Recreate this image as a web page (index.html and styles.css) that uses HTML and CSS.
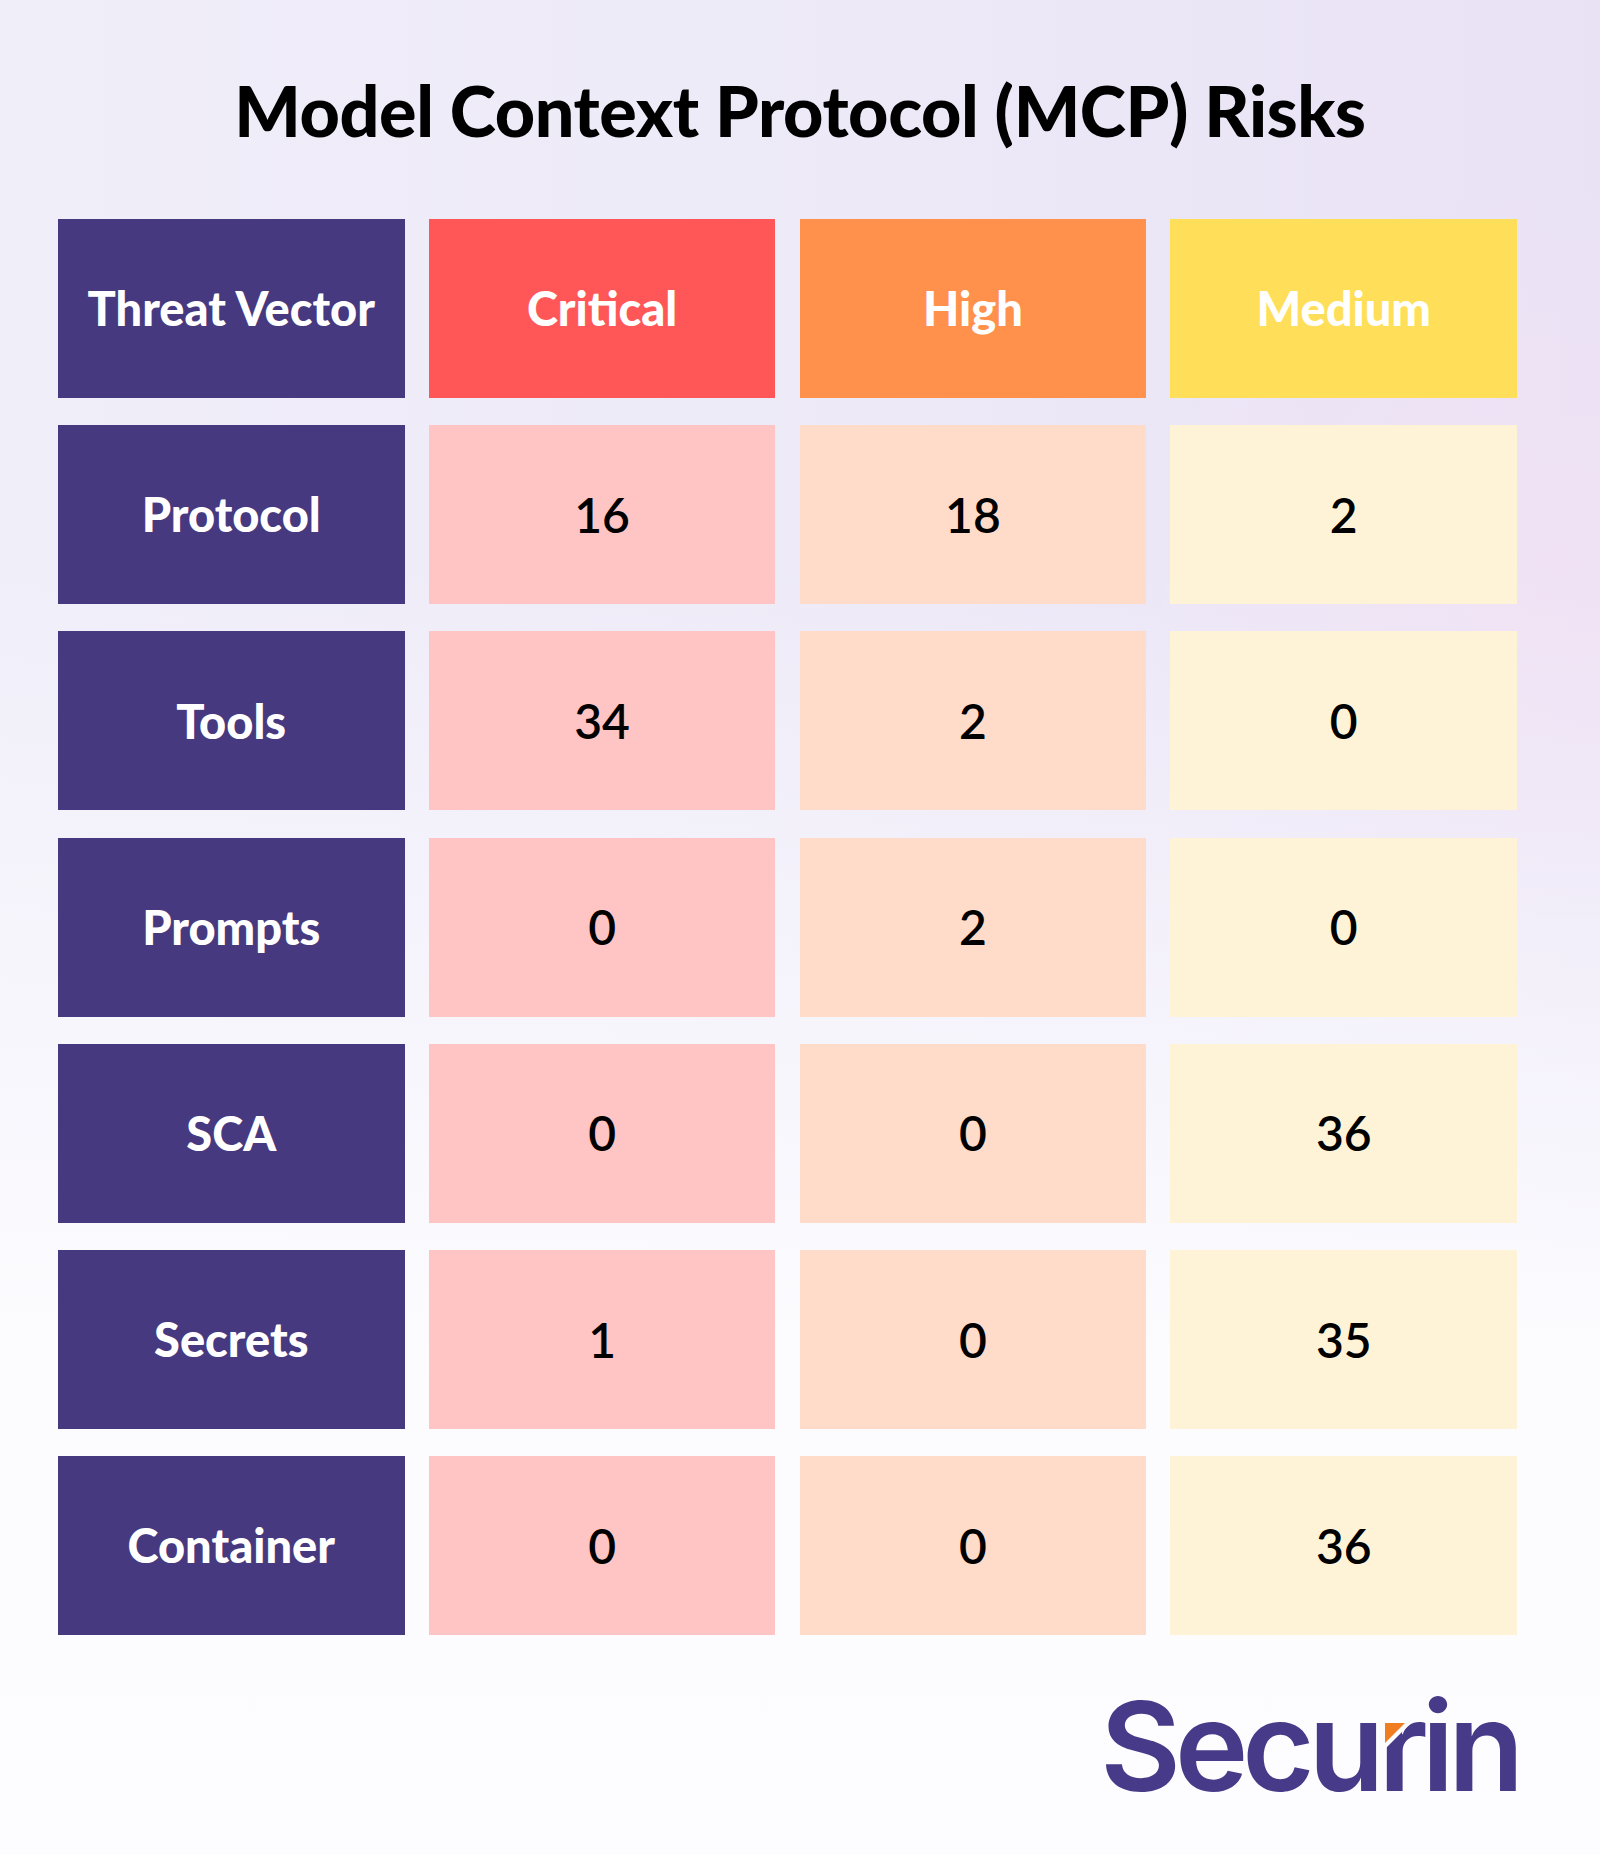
FILE: index.html
```html
<!DOCTYPE html>
<html lang="en">
<head>
<meta charset="utf-8">
<title>Model Context Protocol (MCP) Risks</title>
<link rel="stylesheet" href="styles.css">
</head>
<body>
<div class="page">
  <h1 class="title">Model Context Protocol (MCP) Risks</h1>
  <div class="grid">
    <div class="cell head vector">Threat Vector</div>
    <div class="cell head critical">Critical</div>
    <div class="cell head high">High</div>
    <div class="cell head medium">Medium</div>

    <div class="cell label">Protocol</div>
    <div class="cell num c-light">16</div>
    <div class="cell num h-light">18</div>
    <div class="cell num m-light">2</div>

    <div class="cell label">Tools</div>
    <div class="cell num c-light">34</div>
    <div class="cell num h-light">2</div>
    <div class="cell num m-light">0</div>

    <div class="cell label">Prompts</div>
    <div class="cell num c-light">0</div>
    <div class="cell num h-light">2</div>
    <div class="cell num m-light">0</div>

    <div class="cell label">SCA</div>
    <div class="cell num c-light">0</div>
    <div class="cell num h-light">0</div>
    <div class="cell num m-light">36</div>

    <div class="cell label">Secrets</div>
    <div class="cell num c-light">1</div>
    <div class="cell num h-light">0</div>
    <div class="cell num m-light">35</div>

    <div class="cell label">Container</div>
    <div class="cell num c-light">0</div>
    <div class="cell num h-light">0</div>
    <div class="cell num m-light">36</div>
  </div>
  <div class="footer">
    <div class="logo">Secu<span class="logo-r">r<svg class="accent" viewBox="0 0 26 26" width="26" height="26" aria-hidden="true"><polygon points="0,0 26,0 0,26" fill="#fdfdff"/><polygon points="0,0 20,0 0,20" fill="#f07d20"/></svg></span>in</div>
  </div>
</div>
</body>
</html>
```

FILE: styles.css
```css
html, body {
  margin: 0;
  padding: 0;
}

body {
  width: 1600px;
  height: 1855px;
  overflow: hidden;
  font-family: "Lato", "Liberation Sans", sans-serif;
  background:
    radial-gradient(ellipse 420px 380px at 1560px 560px, rgba(246, 226, 244, 0.55), rgba(246, 226, 244, 0) 100%),
    linear-gradient(180deg, rgba(253, 253, 255, 0) 0px, rgba(253, 253, 255, 0) 560px, #fcfcff 1350px, #fdfdff 1855px),
    linear-gradient(90deg, #f0eef9 0%, #eeebf8 45%, #e9e2f5 100%);
}

.page {
  display: flex;
  flex-direction: column;
  height: 1855px;
}

.title {
  margin: 0;
  padding-top: 68px;
  font-size: 70px;
  line-height: 84px;
  font-weight: 900;
  color: #000;
  text-align: center;
  letter-spacing: -0.4px;
}

.grid {
  margin-top: 67px;
  margin-left: 58px;
  width: 1459px;
  display: grid;
  grid-template-columns: repeat(4, 1fr);
  grid-auto-rows: 179px;
  column-gap: 24.33px;
  row-gap: 27.2px;
}

.cell {
  display: flex;
  align-items: center;
  justify-content: center;
  font-size: 48px;
  line-height: 1.2;
}

.head,
.label {
  color: #fff;
  font-weight: 900;
  font-size: 47px;
}

.vector,
.label {
  background: #46397f;
}

.critical { background: #ff5757; }
.high { background: #ff914d; }
.medium { background: #ffde59; }

.num {
  color: #000;
  font-weight: 600;
}

.c-light { background: #ffc4c4; }
.h-light { background: #ffdbc9; }
.m-light { background: #fff3d7; }

.footer {
  display: flex;
  justify-content: flex-end;
  padding-right: 82px;
  margin-top: 36px;
}

.logo {
  font-family: "Inter", "Liberation Sans", sans-serif;
  font-weight: 600;
  font-size: 124px;
  line-height: 150px;
  color: #473a88;
  letter-spacing: -6px;
}

.logo-r {
  position: relative;
  display: inline-block;
}

.accent {
  position: absolute;
  left: 7px;
  top: 52px;
  display: block;
}
```
